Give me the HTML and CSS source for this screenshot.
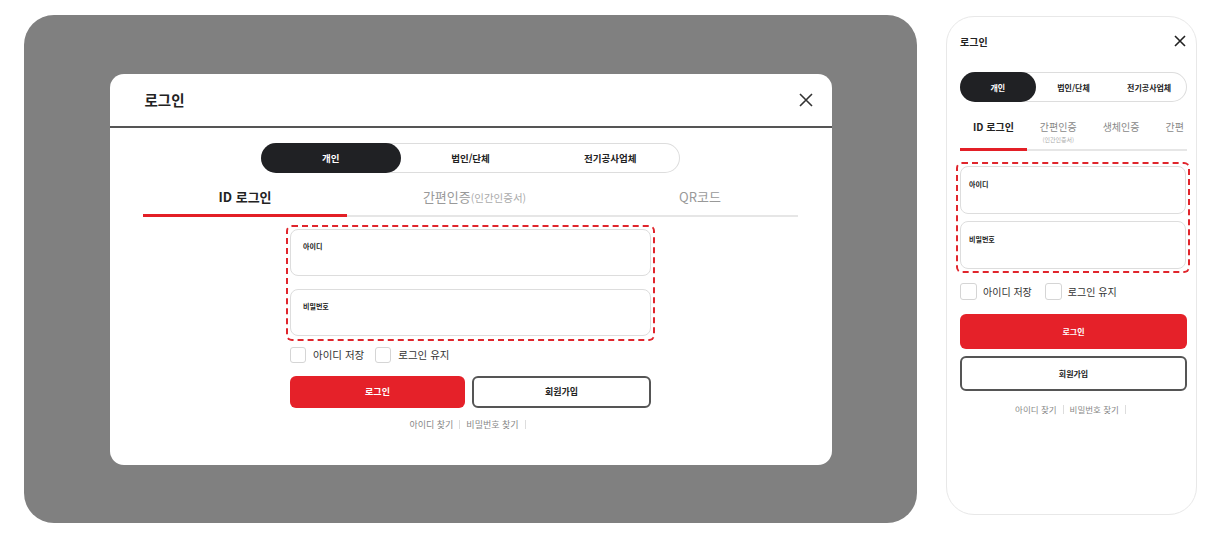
FILE: index.html
```html
<!DOCTYPE html>
<html lang="ko">
<head>
    <meta charset="UTF-8">
    <meta name="viewport" content="width=device-width, initial-scale=1.0">
    <title>로그인</title>
    <link rel="stylesheet" href="styles.css">
</head>
<body>
    <!-- PC: dimmed backdrop with the modal -->
    <div class="stage">
        <div class="modal">
            <div class="modal-head">
                <h2 class="modal-title">로그인</h2>
                <button class="close-btn" aria-label="닫기">
                    <svg width="14" height="14" viewBox="0 0 14 14"><path d="M1 1L13 13M13 1L1 13" stroke="#333" stroke-width="1.6" fill="none"/></svg>
                </button>
            </div>
            <div class="modal-body">
                <div class="segment">
                    <span class="seg-item active">개인</span>
                    <span class="seg-item">법인/단체</span>
                    <span class="seg-item">전기공사업체</span>
                </div>
                <div class="tabs">
                    <span class="tab active">ID 로그인</span>
                    <span class="tab">간편인증<small>(인간인증서)</small></span>
                    <span class="tab">QR코드</span>
                </div>
                <div class="form">
                    <div class="field-box">
                        <label class="field">아이디</label>
                        <label class="field">비밀번호</label>
                    </div>
                    <div class="checks">
                        <span class="check"><i class="box"></i>아이디 저장</span>
                        <span class="check"><i class="box"></i>로그인 유지</span>
                    </div>
                    <div class="btn-row">
                        <button class="btn btn-login">로그인</button>
                        <button class="btn btn-join">회원가입</button>
                    </div>
                    <div class="links">
                        <a>아이디 찾기</a><a>비밀번호 찾기</a>
                    </div>
                </div>
            </div>
        </div>
    </div>

    <!-- Mobile -->
    <div class="mobile">
        <div class="m-head">
            <h2 class="m-title">로그인</h2>
            <svg class="m-close" width="12" height="12" viewBox="0 0 12 12"><path d="M1 1L11 11M11 1L1 11" stroke="#222" stroke-width="1.6" fill="none"/></svg>
        </div>
        <div class="segment m-segment">
            <span class="seg-item active">개인</span>
            <span class="seg-item">법인/단체</span>
            <span class="seg-item">전기공사업체</span>
        </div>
        <div class="m-tabs">
            <span class="m-tab active">ID 로그인</span>
            <span class="m-tab">간편인증<small>(인간인증서)</small></span>
            <span class="m-tab">생체인증</span>
            <span class="m-tab">간편</span>
        </div>
        <div class="field-box m-field-box">
            <label class="field">아이디</label>
            <label class="field">비밀번호</label>
        </div>
        <div class="checks m-checks">
            <span class="check"><i class="box"></i>아이디 저장</span>
            <span class="check"><i class="box"></i>로그인 유지</span>
        </div>
        <button class="btn btn-login m-btn">로그인</button>
        <button class="btn btn-join m-btn">회원가입</button>
        <div class="links m-links">
            <a>아이디 찾기</a><a>비밀번호 찾기</a>
        </div>
    </div>
</body>
</html>
```

FILE: styles.css
```css
body {
    margin: 0;
    padding: 15px 0 0 24px;
    background-color: #fff;
    font-family: "Noto Sans CJK KR", "Noto Sans", sans-serif;
    color: #222;
    display: flex;
    align-items: flex-start;
    gap: 29px;
}

/* ---------- PC modal ---------- */
.stage {
    width: 893px;
    height: 508px;
    background-color: #808080;
    border-radius: 30px;
    display: flex;
    align-items: center;
    justify-content: center;
}

.modal {
    width: 722px;
    height: 391px;
    background-color: #fff;
    border-radius: 14px;
    display: flex;
    flex-direction: column;
}

.modal-head {
    height: 52px;
    border-bottom: 2px solid #555;
    display: flex;
    align-items: center;
    justify-content: space-between;
    padding: 0 19px 0 35px;
}

.modal-title {
    margin: 0;
    font-size: 14.5px;
    font-weight: 700;
}

.close-btn {
    border: none;
    background: none;
    padding: 0;
    display: flex;
}

.modal-body {
    padding-top: 15px;
    display: flex;
    flex-direction: column;
    align-items: center;
}

.segment {
    width: 419px;
    height: 30px;
    border-radius: 15px;
    box-shadow: inset 0 0 0 1px #ddd;
    display: grid;
    grid-template-columns: 1fr 1fr 1fr;
}

.seg-item {
    display: flex;
    align-items: center;
    justify-content: center;
    font-size: 9.5px;
    font-weight: 700;
    color: #222;
    border-radius: 15px;
}

.seg-item.active {
    background-color: #202124;
    color: #fff;
}

.tabs {
    width: 655px;
    display: grid;
    grid-template-columns: 204px 255px 1fr;
    box-shadow: inset 0 -2px 0 #e6e6e6;
}

.tab {
    text-align: center;
    font-size: 13px;
    line-height: 20px;
    padding: 14px 0 9px;
    color: #999;
}

.tab small {
    font-size: 10.5px;
    color: #aaa;
}

.tab.active {
    color: #222;
    font-weight: 700;
    box-shadow: inset 0 -3px 0 #e31f26;
}

.form {
    width: 369px;
    margin-top: 8px;
}

.field-box {
    border: 2px dashed #e0252c;
    border-radius: 6px;
    padding: 2px 2px 3px;
    display: flex;
    flex-direction: column;
    gap: 13px;
}

.field {
    display: block;
    height: 47px;
    box-sizing: border-box;
    border: 1px solid #ddd;
    border-radius: 8px;
    padding: 11px 0 0 12px;
    font-size: 7px;
    font-weight: 700;
    line-height: 10px;
}

.checks {
    display: flex;
    gap: 11px;
    padding: 0 4px;
    margin-top: 6px;
    height: 16px;
    align-items: center;
}

.check {
    display: flex;
    align-items: center;
    gap: 7px;
    font-size: 10.5px;
    color: #333;
}

.box {
    width: 16px;
    height: 16px;
    box-sizing: border-box;
    border: 1px solid #d5d5d5;
    border-radius: 3px;
}

.btn-row {
    display: flex;
    gap: 7px;
    padding: 0 4px;
    margin-top: 13px;
}

.btn {
    flex: 1;
    height: 32px;
    border-radius: 6px;
    font-family: inherit;
    font-size: 9px;
    font-weight: 700;
    cursor: pointer;
}

.btn-login {
    background-color: #e52129;
    color: #fff;
    border: none;
}

.btn-join {
    background-color: #fff;
    color: #222;
    border: 2px solid #555;
}

.links {
    margin-top: 11px;
    text-align: center;
    font-size: 9px;
    line-height: 12px;
    color: #888;
}

.links a::after {
    content: "";
    display: inline-block;
    width: 1px;
    height: 9px;
    background-color: #ddd;
    margin: 0 6px;
    vertical-align: -1px;
}

/* ---------- Mobile ---------- */
.mobile {
    width: 251px;
    height: 499px;
    box-sizing: border-box;
    border: 1px solid #e8e8e8;
    border-radius: 28px;
    padding: 0 9px 0 13px;
    margin-top: 1px;
    overflow: hidden;
    display: flex;
    flex-direction: column;
}

.m-head {
    height: 48px;
    display: flex;
    align-items: center;
    justify-content: space-between;
    padding-right: 1px;
}

.m-title {
    margin: 0;
    font-size: 10px;
    font-weight: 700;
}

.m-segment {
    width: 227px;
    margin-top: 7px;
}

.m-segment .seg-item {
    font-size: 8px;
}

.m-tabs {
    display: flex;
    width: 227px;
    overflow: hidden;
    box-shadow: inset 0 -2px 0 #e6e6e6;
}

.m-tab {
    flex: none;
    display: flex;
    flex-direction: column;
    align-items: center;
    padding: 18px 13px 5px;
    font-size: 10px;
    line-height: 14px;
    color: #888;
    height: 49px;
    box-sizing: border-box;
}

.m-tab small {
    font-size: 6px;
    line-height: 11px;
    color: #aaa;
}

.m-tab.active {
    color: #222;
    font-weight: 700;
    box-shadow: inset 0 -3px 0 #e31f26;
}

.m-field-box {
    margin: 11px -3px 0 -4px;
    padding: 2px;
    gap: 7px;
}

.m-field-box .field {
    height: 48px;
    padding: 12px 0 0 8px;
}

.m-checks {
    padding: 0;
    margin-top: 10px;
    height: 17px;
    gap: 13px;
}

.m-checks .box {
    width: 17px;
    height: 17px;
}

.m-checks .check {
    font-size: 10px;
    gap: 6px;
}

.m-btn {
    flex: none;
    width: 227px;
    height: 35px;
    margin-top: 7px;
    font-size: 8px;
}

.btn-login.m-btn {
    margin-top: 14px;
}

.m-links {
    margin-top: 12px;
    font-size: 8.5px;
}
```
